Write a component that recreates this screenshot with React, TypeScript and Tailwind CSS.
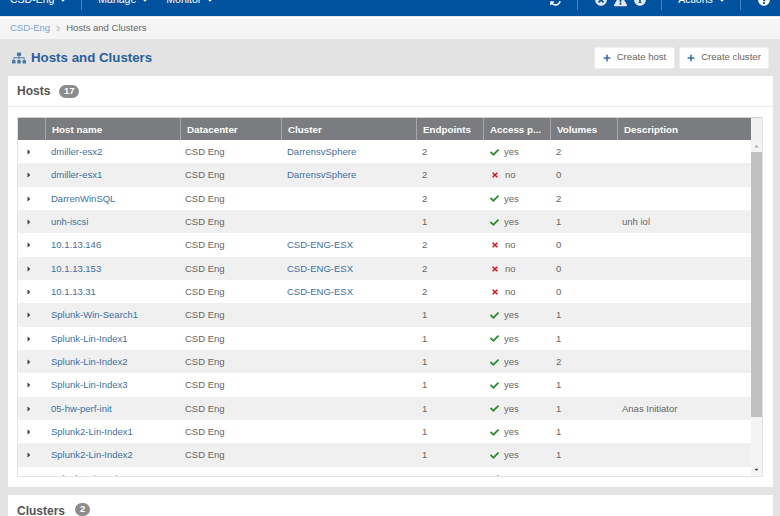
import React from "react";
import { FaCaretRight, FaCaretDown, FaCheck, FaTimes, FaPlus, FaSitemap, FaSyncAlt, FaTimesCircle, FaExclamationTriangle, FaInfoCircle, FaQuestionCircle, FaChevronRight } from "react-icons/fa";

type Row = [string, string, number, boolean, number, string];
const rows: Row[] = [
  ["dmiller-esx2", "DarrensvSphere", 2, true, 2, ""],
  ["dmiller-esx1", "DarrensvSphere", 2, false, 0, ""],
  ["DarrenWinSQL", "", 2, true, 2, ""],
  ["unh-iscsi", "", 1, true, 1, "unh iol"],
  ["10.1.13.146", "CSD-ENG-ESX", 2, false, 0, ""],
  ["10.1.13.153", "CSD-ENG-ESX", 2, false, 0, ""],
  ["10.1.13.31", "CSD-ENG-ESX", 2, false, 0, ""],
  ["Splunk-Win-Search1", "", 1, true, 1, ""],
  ["Splunk-Lin-Index1", "", 1, true, 1, ""],
  ["Splunk-Lin-Index2", "", 1, true, 2, ""],
  ["Splunk-Lin-Index3", "", 1, true, 1, ""],
  ["05-hw-perf-init", "", 1, true, 1, "Anas Initiator"],
  ["Splunk2-Lin-Index1", "", 1, true, 1, ""],
  ["Splunk2-Lin-Index2", "", 1, true, 1, ""],
  ["Splunk2-Lin-Index3", "", 1, true, 1, ""],
];

function NavItem({ label, className }: { label: string; className: string }) {
  return (
    <div className={`flex items-center gap-[5px] whitespace-nowrap text-[10.5px] text-white ${className}`}>
      {label}
      <FaCaretDown className="text-[8px]" />
    </div>
  );
}

function Divider({ className }: { className: string }) {
  return <div className={`h-[20px] w-px bg-[#4a86bd] ${className}`} />;
}

function Head({ label, className }: { label: string; className: string }) {
  return (
    <div className={`flex h-full shrink-0 items-center truncate border-l border-l-[#a5a7aa] pl-[6px] pt-[3px] text-[9.8px] font-bold text-white ${className}`}>
      {label}
    </div>
  );
}

function CreateButton({ label, className }: { label: string; className: string }) {
  return (
    <div className={`flex h-[22px] items-center justify-center gap-[6px] rounded-[2px] border border-[#eeeeee] bg-white text-[9.6px] text-[#666666] ${className}`}>
      <FaPlus className="text-[8px] text-[#2f6ea8]" />
      {label}
    </div>
  );
}

export default function App() {
  return (
    <div className="flex h-[516px] w-[780px] flex-col overflow-hidden bg-[#e3e3e3] font-['Liberation_Sans',Arial,sans-serif]">
      <div className="h-[16px] shrink-0 overflow-hidden bg-[#01529e]">
        <div className="mt-[-10px] flex h-[20px] items-center">
          <NavItem label="CSD-Eng" className="ml-[10px]" />
          <Divider className="ml-[14px]" />
          <NavItem label="Manage" className="ml-[16px]" />
          <NavItem label="Monitor" className="ml-[17px]" />
          <FaSyncAlt className="ml-[336px] text-[11px] text-white" />
          <Divider className="ml-[16px]" />
          <FaTimesCircle className="ml-[17px] text-[12px] text-[#e4e9f0]" />
          <FaExclamationTriangle className="ml-[7px] text-[13px] text-[#e4e9f0]" />
          <FaInfoCircle className="ml-[7px] text-[12px] text-[#e4e9f0]" />
          <Divider className="ml-[15px]" />
          <NavItem label="Actions" className="ml-[16px]" />
          <Divider className="ml-[14px]" />
          <FaQuestionCircle className="ml-[17px] text-[12px] text-white" />
        </div>
      </div>

      <div className="h-[23px] shrink-0 bg-[#f5f5f5]">
        <div className="h-[3px] border-t border-t-[#e8e8e8] bg-white" />
        <div className="flex h-[19px] items-center pl-[10px] text-[9.5px]">
          <span className="text-[#7aa5cf]">CSD-Eng</span>
          <FaChevronRight className="ml-[5px] mr-[4px] text-[7px] text-[#c4c4c4]" />
          <span className="text-[#666666]">Hosts and Clusters</span>
        </div>
      </div>

      <div className="flex h-[37px] shrink-0 items-center pl-[12px] pr-[11px]">
        <FaSitemap className="text-[14px] text-[#4a78a8]" />
        <div className="ml-[5px] text-[13.3px] font-bold text-[#27609d]">Hosts and Clusters</div>
        <CreateButton label="Create host" className="ml-auto w-[81px]" />
        <CreateButton label="Create cluster" className="ml-[4px] w-[90px]" />
      </div>

      <div className="mx-[8px] h-[411px] w-[765px] shrink-0 bg-white">
        <div className="flex h-[31px] items-center border-b border-b-[#ebebeb] pl-[9px]">
          <span className="text-[12px] font-bold text-[#555555]">Hosts</span>
          <span className="ml-[9px] flex h-[13px] w-[20px] items-center justify-center rounded-full bg-[#8c8c8c] text-[9.5px] font-bold text-white">17</span>
        </div>
        <div className="ml-[9px] mt-[10px] h-[360px] w-[746px] border-b border-r border-l border-[#e4e4e4]">
          <div className="flex h-[23px] border-t border-t-[#cfcfcf]">
            <div className="flex h-full w-[733px] bg-[#7a7c80]">
              <div className="h-full w-[27px] shrink-0" />
              <Head label="Host name" className="w-[135px]" />
              <Head label="Datacenter" className="w-[101px]" />
              <Head label="Cluster" className="w-[135px]" />
              <Head label="Endpoints" className="w-[67px]" />
              <Head label="Access p..." className="w-[67px]" />
              <Head label="Volumes" className="w-[67px]" />
              <Head label="Description" className="w-[134px]" />
            </div>
            <div className="h-full flex-1 bg-[#f1f1f1]" />
          </div>
          <div className="flex h-[336px]">
            <div className="w-[733px] overflow-hidden">
              {rows.map((r, i) => (
                <div key={r[0]} className={`flex h-[23.33px] items-center pt-[1px] text-[9.5px] text-[#666666] ${i % 2 ? "bg-[#f0f0f0]" : "bg-white"}`}>
                  <div className="flex w-[21px] shrink-0 justify-center">
                    <FaCaretRight className="text-[8px] text-[#444444]" />
                  </div>
                  <div className="ml-[6px] w-[135px] shrink-0 pl-[6px] text-[#3f6fa3]">{r[0]}</div>
                  <div className="w-[101px] shrink-0 pl-[5px]">CSD Eng</div>
                  <div className="w-[135px] shrink-0 pl-[6px] text-[#3f6fa3]">{r[1]}</div>
                  <div className="w-[67px] shrink-0 pl-[6px]">{r[2]}</div>
                  <div className="flex w-[67px] shrink-0 items-center gap-[5px] pl-[7px]">
                    {r[3] ? <FaCheck className="text-[9px] text-[#2a8c2a]" /> : <FaTimes className="ml-[1px] mr-[1px] text-[8px] text-[#e0101a]" />}
                    {r[3] ? "yes" : "no"}
                  </div>
                  <div className="w-[67px] shrink-0 pl-[6px]">{r[4]}</div>
                  <div className="w-[133px] shrink-0 pl-[5px]">{r[5]}</div>
                </div>
              ))}
            </div>
            <div className="flex w-[11px] flex-col bg-[#f4f4f4]">
              <div className="flex h-[12px] items-center justify-center text-[#aaaaaa]">
                <FaCaretDown className="rotate-180 text-[7px]" />
              </div>
              <div className="h-[265px] bg-[#c1c1c1]" />
              <div className="mt-auto flex h-[13px] items-center justify-center text-[#444444]">
                <FaCaretDown className="text-[7px]" />
              </div>
            </div>
          </div>
        </div>
      </div>

      <div className="mx-[8px] mt-[8px] flex h-[40px] w-[765px] shrink-0 items-start bg-white pl-[9px] pt-[7px]">
        <span className="text-[12px] font-bold text-[#555555]">Clusters</span>
        <span className="ml-[10px] mt-[1px] flex h-[13px] w-[15px] items-center justify-center rounded-full bg-[#8c8c8c] text-[9.5px] font-bold text-white">2</span>
      </div>
    </div>
  );
}
